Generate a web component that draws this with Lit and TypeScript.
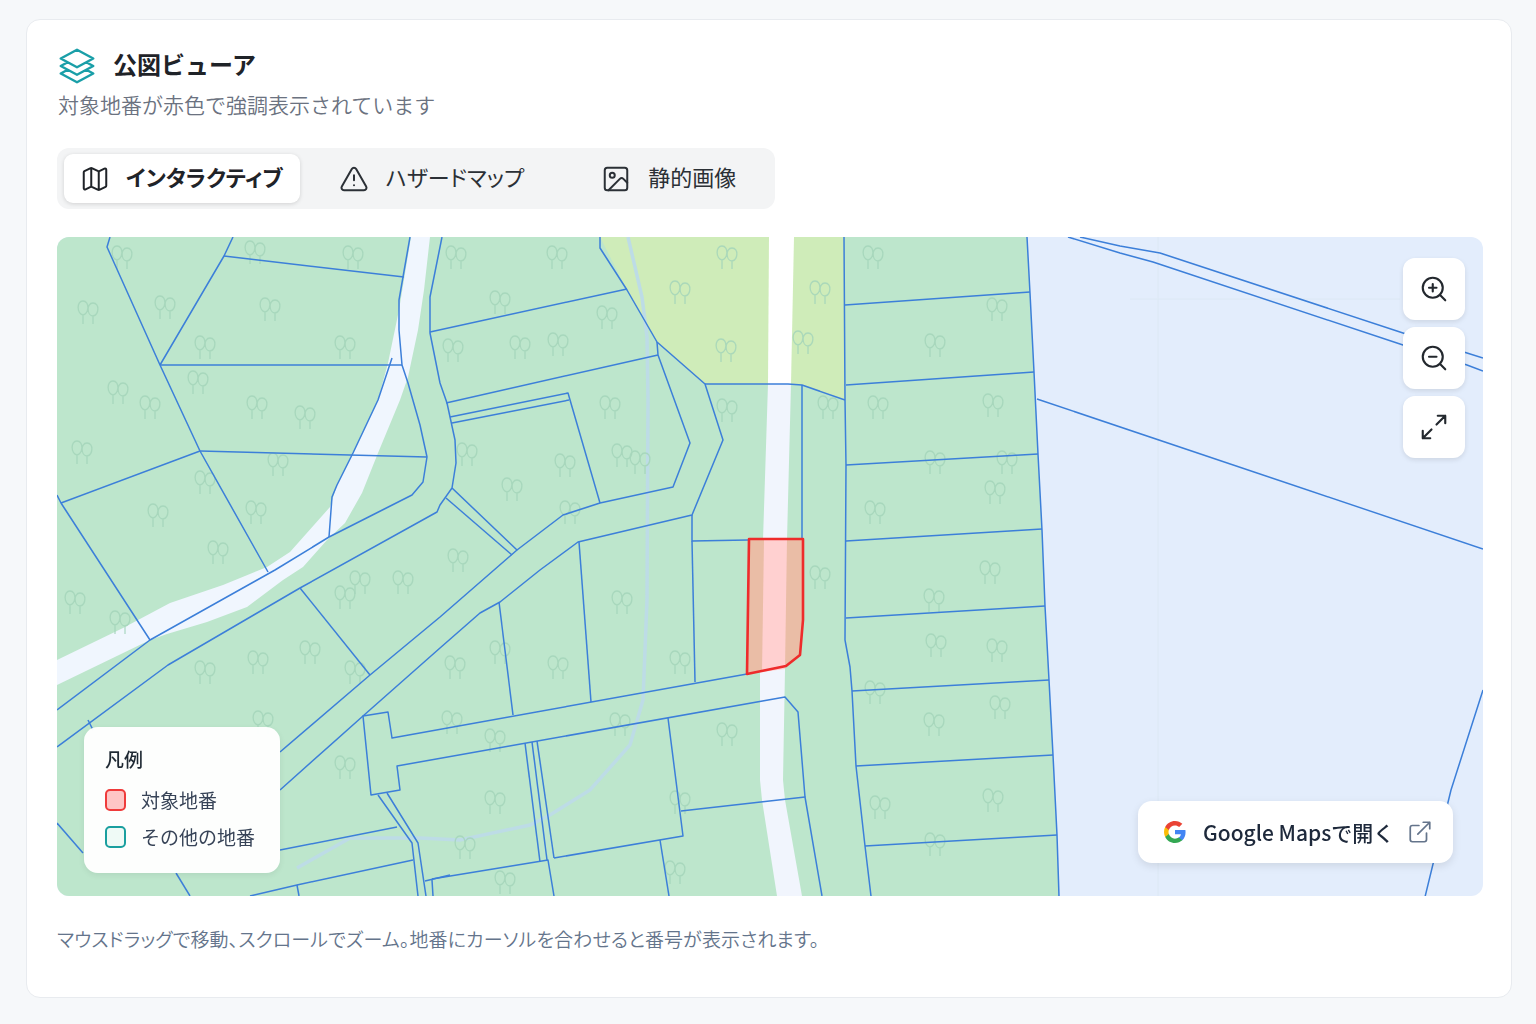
import { LitElement, html, css, svg } from "lit";
import { customElement } from "lit/decorators.js";

// parcel boundaries, in page coordinates (map viewBox starts at 57,237)
const PARCELS: string[] = [
  "110,237 107,247 160,365 200,451 268,572",
  "233,237 224,256 160,365",
  "224,256 404,277",
  "160,365 402,365",
  "410,237 403,277 399,300 399,330 402,365 408,383 420,425 427,457 423,482 412,495 329,537 275,570 150,640 57,710",
  "392,358 378,400 353,453 337,485 332,497 329,537",
  "200,451 427,457",
  "200,451 61,503",
  "57,495 61,503 150,640",
  "442,237 430,297 430,333 440,383 447,403 455,440 456,463 452,488 440,505 437,512 300,588 168,665 57,747",
  "300,588 370,675",
  "452,488 517,550 440,617 370,675 280,752",
  "446,498 512,555",
  "517,550 563,515 600,503 673,487 690,443 658,355 657,342",
  "600,237 600,248 627,290 657,342 705,384 723,440 692,515 578,542 540,570 500,602 480,613 440,648 363,716 280,790",
  "430,332 627,289",
  "446,403 658,355",
  "450,417 568,393 600,503",
  "452,423 569,400",
  "705,384 788,384 802,385 845,400",
  "802,385 802,538",
  "692,515 692,541 748,540",
  "692,541 695,682",
  "579,542 591,702",
  "499,602 513,715",
  "747,674 392,738 388,712 363,716 371,795 400,790 397,766 785,697 798,712 805,797 822,896",
  "525,743 540,862",
  "532,742 547,860",
  "537,741 554,858",
  "668,718 683,836 554,858",
  "681,811 805,797",
  "432,879 548,860 554,896",
  "660,840 669,896",
  "378,795 412,843 418,896",
  "387,793 418,843 426,896",
  "432,880 433,896",
  "425,881 450,875",
  "280,850 397,827",
  "413,860 297,885 250,896",
  "297,885 299,896",
  "176,873 190,896",
  "57,823 83,853",
  "88,720 93,730",
  "844,237 845,400 846,465 845,640 850,667 852,691 856,766 865,846 871,896",
  "1027,237 1030,293 1034,372 1038,454 1042,530 1045,606 1049,680 1053,755 1057,835 1059,896",
  "845,305 1030,292",
  "846,385 1034,372",
  "846,465 1038,454",
  "846,541 1042,529",
  "846,618 1045,606",
  "852,691 1049,680",
  "856,766 1053,755",
  "865,846 1057,835",
  "1080,237 1120,246 1160,253 1403,333 1467,353 1483,358",
  "1068,237 1120,253 1153,262 1403,345 1467,365 1483,371",
  "1037,399 1483,549",
  "1483,690 1451,790 1425,897",
];

const TREES: [number, number][] = [
  [122, 255], [165, 305], [88, 310], [205, 345], [270, 307], [345, 345], [118, 390], [150, 405],
  [82, 450], [257, 405], [305, 415], [198, 380], [278, 462], [158, 513], [205, 480], [256, 510],
  [218, 550], [353, 255], [255, 250], [75, 600], [345, 595], [205, 670], [258, 660], [360, 580],
  [403, 580], [458, 558], [512, 487], [565, 463], [622, 453], [610, 405], [467, 452], [453, 348],
  [558, 342], [456, 255], [557, 255], [500, 300], [607, 315], [727, 255], [680, 290], [726, 348],
  [803, 340], [820, 290], [727, 408], [820, 575], [828, 405], [873, 255], [935, 343], [997, 307],
  [993, 403], [878, 405], [1007, 460], [875, 510], [935, 460], [934, 598], [997, 648], [936, 643],
  [934, 722], [1000, 705], [935, 842], [993, 798], [880, 805], [622, 600], [680, 660], [558, 665],
  [455, 665], [355, 670], [345, 765], [452, 720], [263, 720], [495, 738], [620, 722], [727, 732],
  [680, 800], [495, 800], [465, 845], [505, 880], [675, 870], [500, 650], [640, 460], [520, 345],
  [120, 620], [310, 650], [570, 510], [875, 690], [995, 490], [990, 570],
];

@customElement("app-root")
export class AppRoot extends LitElement {
  static override styles = css`
    :host {
      display: block;
      box-sizing: border-box;
      height: 1024px;
      padding: 19px 24px 26px 26px;
      background: #f6f8fa;
      font-family: "Noto Sans CJK JP", "Noto Sans", sans-serif;
      color: #1f2933;
    }

    .card {
      box-sizing: border-box;
      height: 979px;
      padding: 0 28px 0 30px;
      background: #fff;
      border: 1px solid #e8ebef;
      border-radius: 14px;
    }

    .head {
      display: flex;
      align-items: center;
      gap: 16px;
      height: 40px;
      margin-top: 26px;
    }

    .head svg {
      width: 40px;
      height: 40px;
      stroke: #1a9fa8;
      stroke-width: 1.5;
      fill: none;
    }

    h1 {
      margin: 0 0 4px;
      font-size: 24px;
      font-weight: 700;
      line-height: 36px;
      color: #1f2328;
    }

    .sub {
      margin: 4px 0 0 1px;
      font-size: 21px;
      line-height: 28px;
      color: #6b7280;
      font-weight: 350;
    }

    .tabs {
      display: inline-flex;
      margin-top: 30px;
      padding: 6px 6px 6px 7px;
      width: 718px;
      box-sizing: border-box;
      height: 61px;
      background: #f3f4f5;
      border-radius: 12px;
      vertical-align: top;
    }

    .tab {
      display: flex;
      align-items: center;
      gap: 17px;
      height: 49px;
      padding: 0 38px 0 39px;
      font-size: 22px;
      color: #2b3036;
      border-radius: 9px;
      white-space: nowrap;
      font-feature-settings: "palt";
    }

    .tab span {
      margin-bottom: 5px;
    }

    .tab svg {
      width: 30px;
      height: 30px;
      flex: none;
      fill: none;
      stroke: currentColor;
      stroke-width: 1.6;
      stroke-linecap: round;
      stroke-linejoin: round;
    }

    .tab.active {
      gap: 16px;
      padding: 0 17px 0 16px;
      background: #fff;
      font-weight: 700;
      box-shadow: 0 1px 4px rgba(0, 0, 0, 0.14);
      color: #1f2328;
    }

    .map {
      position: relative;
      margin-top: 28px;
      height: 659px;
      border-radius: 12px;
      overflow: hidden;
      background: #e3edfc;
    }

    .map > svg {
      display: block;
      width: 100%;
      height: 100%;
    }

    .zoom {
      position: absolute;
      top: 21px;
      right: 18px;
      display: flex;
      flex-direction: column;
      gap: 7px;
    }

    .zoom div {
      display: flex;
      align-items: center;
      justify-content: center;
      width: 62px;
      height: 62px;
      background: #fff;
      border-radius: 12px;
      box-shadow: 0 2px 5px rgba(0, 0, 0, 0.1);
    }

    .zoom svg {
      width: 30px;
      height: 30px;
      fill: none;
      stroke: #23282e;
      stroke-width: 1.7;
      stroke-linecap: round;
      stroke-linejoin: round;
    }

    .legend {
      position: absolute;
      left: 27px;
      bottom: 23px;
      box-sizing: border-box;
      width: 196px;
      height: 146px;
      padding: 18px 21px;
      background: rgba(255, 255, 255, 0.96);
      border-radius: 14px;
      box-shadow: 0 2px 6px rgba(0, 0, 0, 0.07);
    }

    .legend h2 {
      margin: 0 0 8px;
      font-size: 19px;
      line-height: 28px;
      font-weight: 500;
      color: #1f2933;
    }

    .legend .row {
      display: flex;
      align-items: center;
      gap: 15px;
      height: 37px;
      font-size: 19px;
      color: #374357;
    }

    .swatch {
      box-sizing: border-box;
      width: 21px;
      height: 22px;
      border-radius: 5px;
      border: 2px solid #ef3b3b;
      background: #fec5c5;
    }

    .swatch.other {
      border-color: #1a9f9f;
      background: #effaf6;
    }

    .gmaps {
      position: absolute;
      right: 30px;
      bottom: 33px;
      box-sizing: border-box;
      display: flex;
      align-items: center;
      width: 315px;
      height: 62px;
      padding-left: 25px;
      background: #fff;
      border-radius: 14px;
      box-shadow: 0 3px 8px rgba(0, 0, 0, 0.1);
      font-size: 21px;
      font-weight: 500;
      color: #1e293b;
      white-space: nowrap;
    }

    .gmaps .g {
      width: 24px;
      height: 24px;
      flex: none;
      margin-right: 16px;
    }

    .gmaps .ext {
      width: 26px;
      height: 26px;
      flex: none;
      margin-left: 13px;
      fill: none;
      stroke: #64748b;
      stroke-width: 1.6;
      stroke-linecap: round;
      stroke-linejoin: round;
    }

    .note {
      margin: 29px 0 0;
      font-size: 19px;
      letter-spacing: 0.13px;
      line-height: 28px;
      color: #64748b;
      font-weight: 350;
      font-feature-settings: "palt";
    }
  `;

  private _renderMap() {
    return html`
      <svg viewBox="57 237 1426 659" preserveAspectRatio="none">
        <polygon fill="#bde6cc" points="57,237 1027,237 1030,293 1034,372 1038,454 1042,530 1045,606 1049,680 1053,755 1057,835 1059,896 57,896" />
        <polygon fill="#cfecb9" points="600,237 844,237 845,400 802,385 705,384 657,342 627,290" />
        <path fill="#f0f6fe" d="M411 237H430L424 290L418 330L408 377L400 400L378 453L362 493L345 523L327 540L303 567L283 580L247 607L207 622L167 634L150 640L57 685V660L123 628L170 603L223 585L267 567L290 552L330 507L337 485L353 453L378 400L388 363L399 310Z" />
        <polygon fill="#fff" points="769,237 794,237 791,384 768,384" />
        <path fill="#f1f5fd" d="M768 384H791L787 540L785 670L783 780L785 800L802 896H777L762 800L760 780L760 670L763 540Z" />
        <polyline fill="none" stroke="#bddce6" stroke-width="3.5" points="628,237 642,297 647,337 648,400 647,600 643,700 630,745 590,790 550,815 530,825 460,840 420,838 350,838 297,868" />
        <g fill="none" stroke="#a4d5ba" stroke-width="1.3" opacity="0.85">
          ${TREES.map(
            ([x, y]) =>
              svg`<path transform="translate(${x} ${y})" d="M-5 14V5M-5 5c-6-1-7-14 0-14s6 13 0 14M5 14V6M5 6c-6 0-7-13 0-13s6 12 0 13" />`,
          )}
        </g>
        <path fill="none" stroke="#dce8f4" d="M1158 237V896M1130 299H1400" />
        <g fill="none" stroke="#3c7fd9" stroke-width="1.5" stroke-linejoin="round">
          ${PARCELS.map((p) => svg`<polyline points="${p}" />`)}
        </g>
        <polygon fill="#eabda6" points="749,539 803,539 803,620 800,655 786,666 747,674" />
        <polygon fill="#ffd0d0" points="764,539 787,539 785,669 762,672" />
        <polygon fill="none" stroke="#ee2b2b" stroke-width="2.6" stroke-linejoin="round" points="749,539 803,539 803,620 800,655 786,666 747,674" />
      </svg>
    `;
  }

  override render() {
    return html`
      <div class="card">
        <div class="head">
          <svg viewBox="0 0 24 24" stroke-linecap="round" stroke-linejoin="round">
            <path d="M6.429 9.75 2.25 12l4.179 2.25m0-4.5 5.571 3 5.571-3m-11.142 0L2.25 7.5 12 2.25l9.75 5.25-4.179 2.25m0 0L21.75 12l-4.179 2.25m0 0 4.179 2.25L12 21.75 2.25 16.5l4.179-2.25m11.142 0-5.571 3-5.571-3" />
          </svg>
          <h1>公図ビューア</h1>
        </div>
        <p class="sub">対象地番が赤色で強調表示されています</p>
        <div class="tabs">
          <div class="tab active">
            <svg viewBox="0 0 24 24">
              <path d="M14.106 5.553a2 2 0 0 0 1.788 0l3.659-1.83A1 1 0 0 1 21 4.619v12.764a1 1 0 0 1-.553.894l-4.553 2.277a2 2 0 0 1-1.788 0l-4.212-2.106a2 2 0 0 0-1.788 0l-3.659 1.83A1 1 0 0 1 3 19.381V6.618a1 1 0 0 1 .553-.894l4.553-2.277a2 2 0 0 1 1.788 0zM15 5.764v15M9 3.236v15" />
            </svg>
            <span>インタラクティブ</span>
          </div>
          <div class="tab">
            <svg viewBox="0 0 24 24">
              <path d="m21.73 18-8-14a2 2 0 0 0-3.48 0l-8 14A2 2 0 0 0 4 21h16a2 2 0 0 0 1.73-3M12 9v4M12 17h.01" />
            </svg>
            <span>ハザードマップ</span>
          </div>
          <div class="tab">
            <svg viewBox="0 0 24 24">
              <rect x="3" y="3" width="18" height="18" rx="2" />
              <circle cx="9" cy="9" r="2" />
              <path d="m21 15-3.086-3.086a2 2 0 0 0-2.828 0L6 21" />
            </svg>
            <span>静的画像</span>
          </div>
        </div>
        <div class="map">
          ${this._renderMap()}
          <div class="zoom">
            <div>
              <svg viewBox="0 0 24 24"><circle cx="11" cy="11" r="8" /><path d="m21 21-4.35-4.35M11 8v6M8 11h6" /></svg>
            </div>
            <div>
              <svg viewBox="0 0 24 24"><circle cx="11" cy="11" r="8" /><path d="m21 21-4.35-4.35M8 11h6" /></svg>
            </div>
            <div>
              <svg viewBox="0 0 24 24"><path d="M15 3h6v6M9 21H3v-6M21 3l-7 7M3 21l7-7" /></svg>
            </div>
          </div>
          <div class="legend">
            <h2>凡例</h2>
            <div class="row"><span class="swatch"></span>対象地番</div>
            <div class="row"><span class="swatch other"></span>その他の地番</div>
          </div>
          <div class="gmaps">
            <svg class="g" viewBox="0 0 24 24">
              <path fill="#4285F4" d="M22.56 12.25c0-.78-.07-1.53-.2-2.25H12v4.26h5.92c-.26 1.37-1.04 2.53-2.21 3.31v2.77h3.57c2.08-1.92 3.28-4.74 3.28-8.09z" />
              <path fill="#34A853" d="M12 23c2.97 0 5.46-.98 7.28-2.66l-3.57-2.77c-.98.66-2.23 1.06-3.71 1.06-2.86 0-5.29-1.93-6.16-4.53H2.18v2.84C3.99 20.53 7.7 23 12 23z" />
              <path fill="#FBBC05" d="M5.84 14.09c-.22-.66-.35-1.36-.35-2.09s.13-1.43.35-2.09V7.07H2.18C1.43 8.55 1 10.22 1 12s.43 3.45 1.18 4.93l2.85-2.22.81-.62z" />
              <path fill="#EA4335" d="M12 5.38c1.62 0 3.06.56 4.21 1.64l3.15-3.15C17.45 2.09 14.97 1 12 1 7.7 1 3.99 3.47 2.18 7.07l3.66 2.84c.87-2.6 3.3-4.53 6.16-4.53z" />
            </svg>
            Google Mapsで開く
            <svg class="ext" viewBox="0 0 24 24"><path d="M15 3h6v6M10 14 21 3M18 13v6a2 2 0 0 1-2 2H5a2 2 0 0 1-2-2V8a2 2 0 0 1 2-2h6" /></svg>
          </div>
        </div>
        <p class="note">マウスドラッグで移動、スクロールでズーム。地番にカーソルを合わせると番号が表示されます。</p>
      </div>
    `;
  }
}

declare global {
  interface HTMLElementTagNameMap {
    "app-root": AppRoot;
  }
}
